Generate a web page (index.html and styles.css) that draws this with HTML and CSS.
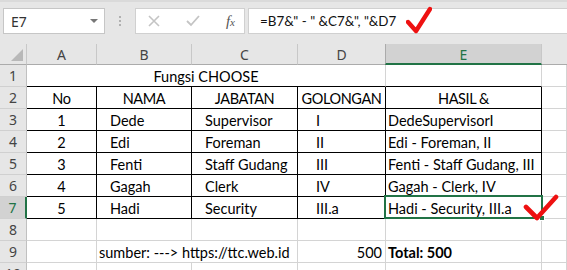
FILE: index.html
```html
<!DOCTYPE html>
<html>
<head>
<meta charset="utf-8">
<link rel="stylesheet" href="styles.css">
</head>
<body>
<div class="app">
  <div class="toolbar">
    <div class="namebox"><span>E7</span><span class="caret"></span></div>
    <div class="grip"><span></span><span></span><span></span></div>
    <div class="btnbox">
      <svg class="ico" width="12" height="12" viewBox="0 0 12 12"><path d="M1 1L11 11M11 1L1 11" stroke="#c4c4c4" stroke-width="1.6" fill="none"/></svg>
      <svg class="ico" width="14" height="12" viewBox="0 0 14 12"><path d="M1 6L5 10L13 1" stroke="#c4c4c4" stroke-width="1.8" fill="none"/></svg>
      <span class="fx">f<i>x</i></span>
    </div>
    <div class="formula">
      <span class="ftext">=B7&amp;" - " &amp;C7&amp;", "&amp;D7</span>
      <svg class="redcheck1" width="26" height="28" viewBox="0 0 26 28"><path d="M2 16 L10 25 L24 3" stroke="#ee1111" stroke-width="4.4" fill="none" stroke-linecap="round" stroke-linejoin="round"/></svg>
    </div>
  </div>
  <div class="sheet">
    <div class="corner"><svg width="14" height="14" viewBox="0 0 14 14"><path d="M13 1V13H1Z" fill="#b8b8b8"/></svg></div>
    <div class="ch">A</div>
    <div class="ch">B</div>
    <div class="ch">C</div>
    <div class="ch">D</div>
    <div class="ch sel">E</div>
    <div class="ch last"></div>

    <div class="rh">1</div>
    <div class="c merge4 ctr bb">Fungsi CHOOSE</div>
    <div class="c bb"></div>
    <div class="c"></div>

    <div class="rh">2</div>
    <div class="c tb ctr caps">No</div>
    <div class="c tb ctr caps">NAMA</div>
    <div class="c tb ctr caps">JABATAN</div>
    <div class="c tb ctr caps">GOLONGAN</div>
    <div class="c tb ctr caps">HASIL &amp;</div>
    <div class="c"></div>

    <div class="rh">3</div>
    <div class="c tb ctr">1</div>
    <div class="c tb ind">Dede</div>
    <div class="c tb ind">Supervisor</div>
    <div class="c tb ind2">I</div>
    <div class="c tb pl">DedeSupervisorI</div>
    <div class="c"></div>

    <div class="rh">4</div>
    <div class="c tb ctr">2</div>
    <div class="c tb ind">Edi</div>
    <div class="c tb ind">Foreman</div>
    <div class="c tb ind2">II</div>
    <div class="c tb pl">Edi - Foreman, II</div>
    <div class="c"></div>

    <div class="rh">5</div>
    <div class="c tb ctr">3</div>
    <div class="c tb ind">Fenti</div>
    <div class="c tb ind">Staff Gudang</div>
    <div class="c tb ind2">III</div>
    <div class="c tb pl">Fenti - Staff Gudang, III</div>
    <div class="c"></div>

    <div class="rh">6</div>
    <div class="c tb ctr">4</div>
    <div class="c tb ind">Gagah</div>
    <div class="c tb ind">Clerk</div>
    <div class="c tb ind2">IV</div>
    <div class="c tb pl">Gagah - Clerk, IV</div>
    <div class="c"></div>

    <div class="rh rsel">7</div>
    <div class="c tb ctr">5</div>
    <div class="c tb ind">Hadi</div>
    <div class="c tb ind">Security</div>
    <div class="c tb ind2">III.a</div>
    <div class="c tb pl active">Hadi - Security, III.a<span class="selbox"><span class="handle"></span></span><svg class="redcheck2" width="36" height="30" viewBox="0 0 36 30"><path d="M3 13 L14 24 L33 3" stroke="#ee1111" stroke-width="4.6" fill="none" stroke-linecap="round" stroke-linejoin="round"/></svg></div>
    <div class="c"></div>

    <div class="rh">8</div>
    <div class="c"></div>
    <div class="c"></div>
    <div class="c"></div>
    <div class="c"></div>
    <div class="c"></div>
    <div class="c"></div>

    <div class="rh">9</div>
    <div class="c"></div>
    <div class="c merge2 pl">sumber: ---&gt; https://ttc.web.id</div>
    <div class="c pr">500</div>
    <div class="c pl bold">Total: 500</div>
    <div class="c"></div>

    <div class="rh">10</div>
    <div class="c"></div>
    <div class="c"></div>
    <div class="c"></div>
    <div class="c"></div>
    <div class="c"></div>
    <div class="c"></div>
  </div>
</div>
</body>
</html>
```
FILE: styles.css
```css
* { box-sizing: border-box; }
html, body { margin: 0; padding: 0; }
body { width: 567px; height: 270px; overflow: hidden; background: #fff; }
.app { width: 567px; height: 270px; overflow: hidden; }

.toolbar {
  height: 44px;
  background: #e6e6e6;
  border-top: 2px solid #dadada;
  display: flex;
  align-items: flex-start;
  padding: 6px 0 0 3px;
}
.namebox {
  width: 102px; height: 26px;
  background: #fff;
  border: 1px solid #c6c6c6;
  display: flex; align-items: center; justify-content: space-between;
  padding: 0 6px 0 7px;
  font-family: "Noto Sans", sans-serif; font-size: 14px; color: #333;
}
.caret { width: 0; height: 0; border-left: 4px solid transparent; border-right: 4px solid transparent; border-top: 4px solid #777; }
.grip { width: 30px; height: 26px; display: flex; flex-direction: column; align-items: center; justify-content: center; gap: 2px; }
.grip span { width: 2px; height: 2px; background: #b0b0b0; }
.btnbox {
  width: 110px; height: 26px;
  background: #fff; border: 1px solid #d0d0d0;
  display: flex; align-items: center; justify-content: space-between;
  padding: 0 9px 0 12px;
}
.fx { font-family: "Liberation Serif", serif; font-style: italic; font-size: 15px; color: #555; }
.fx i { font-size: 11px; }
.formula {
  flex: 1; height: 26px; margin-left: 3px;
  background: #fff; border: 1px solid #d0d0d0; border-right: none;
  display: flex; align-items: center; padding-left: 11px;
  position: relative;
}
.ftext { font-family: "Lato", sans-serif; font-size: 13.4px; color: #111; }
.redcheck1 { position: absolute; left: 157px; top: -3px; }

.sheet {
  display: grid;
  grid-template-columns: 27px 70px 95px 106px 88px 156px 1fr;
  grid-template-rows: 21px repeat(10, 22px);
  font-family: "Lato", sans-serif; font-size: 14.5px; color: #000;
}
.corner { background: #e6e6e6; border-right: 1px solid #c8c8c8; border-bottom: 1px solid #ababab; display: flex; align-items: flex-end; justify-content: flex-end; padding: 0 2px 2px 0; }
.corner svg { display: block; }
.ch {
  background: #e6e6e6; border-right: 1px solid #c8c8c8; border-bottom: 1px solid #ababab;
  display: flex; align-items: center; justify-content: center;
  font-family: "Noto Sans", sans-serif; font-size: 14px; color: #444; padding-top: 1px;
}
.ch.last { border-right: none; }
.ch.sel { background: #d2d2d2; color: #217346; border-bottom: 2px solid #217346; border-left: 1px solid #ababab; margin-left: -1px; }
.rh {
  background: #e6e6e6; border-right: 1px solid #c0c0c0; border-bottom: 1px solid #d0d0d0;
  display: flex; align-items: center; justify-content: center;
  font-family: "Noto Sans", sans-serif; font-size: 14px; color: #444;
}
.rh.rsel { background: #d2d2d2; color: #217346; border-right: 2px solid #217346; }

.c {
  border-right: 1px solid #d4d4d4; border-bottom: 1px solid #d4d4d4;
  display: flex; align-items: center; white-space: nowrap;
  padding-top: 2px;
}
.tb { border-right-color: #000; border-bottom-color: #000; }
.bb { border-bottom-color: #000; }
.ctr { justify-content: center; }
.caps { letter-spacing: -0.4px; }
.ind { padding-left: 13px; }
.ind2 { padding-left: 18px; }
.pl { padding-left: 2px; }
.pr { justify-content: flex-end; padding-right: 3px; }
.bold { font-weight: bold; }
.merge4 { grid-column: span 4; }
.merge2 { grid-column: span 2; }

.active { position: relative; }
.selbox {
  position: absolute; left: -2px; top: -2px; width: 159px; height: 24px;
  border: 2px solid #217346;
}
.handle {
  position: absolute; right: -4px; bottom: -4px; width: 6px; height: 6px;
  background: #217346; border: 1px solid #fff;
}
.redcheck2 { position: absolute; left: 137px; top: -3px; }
```
